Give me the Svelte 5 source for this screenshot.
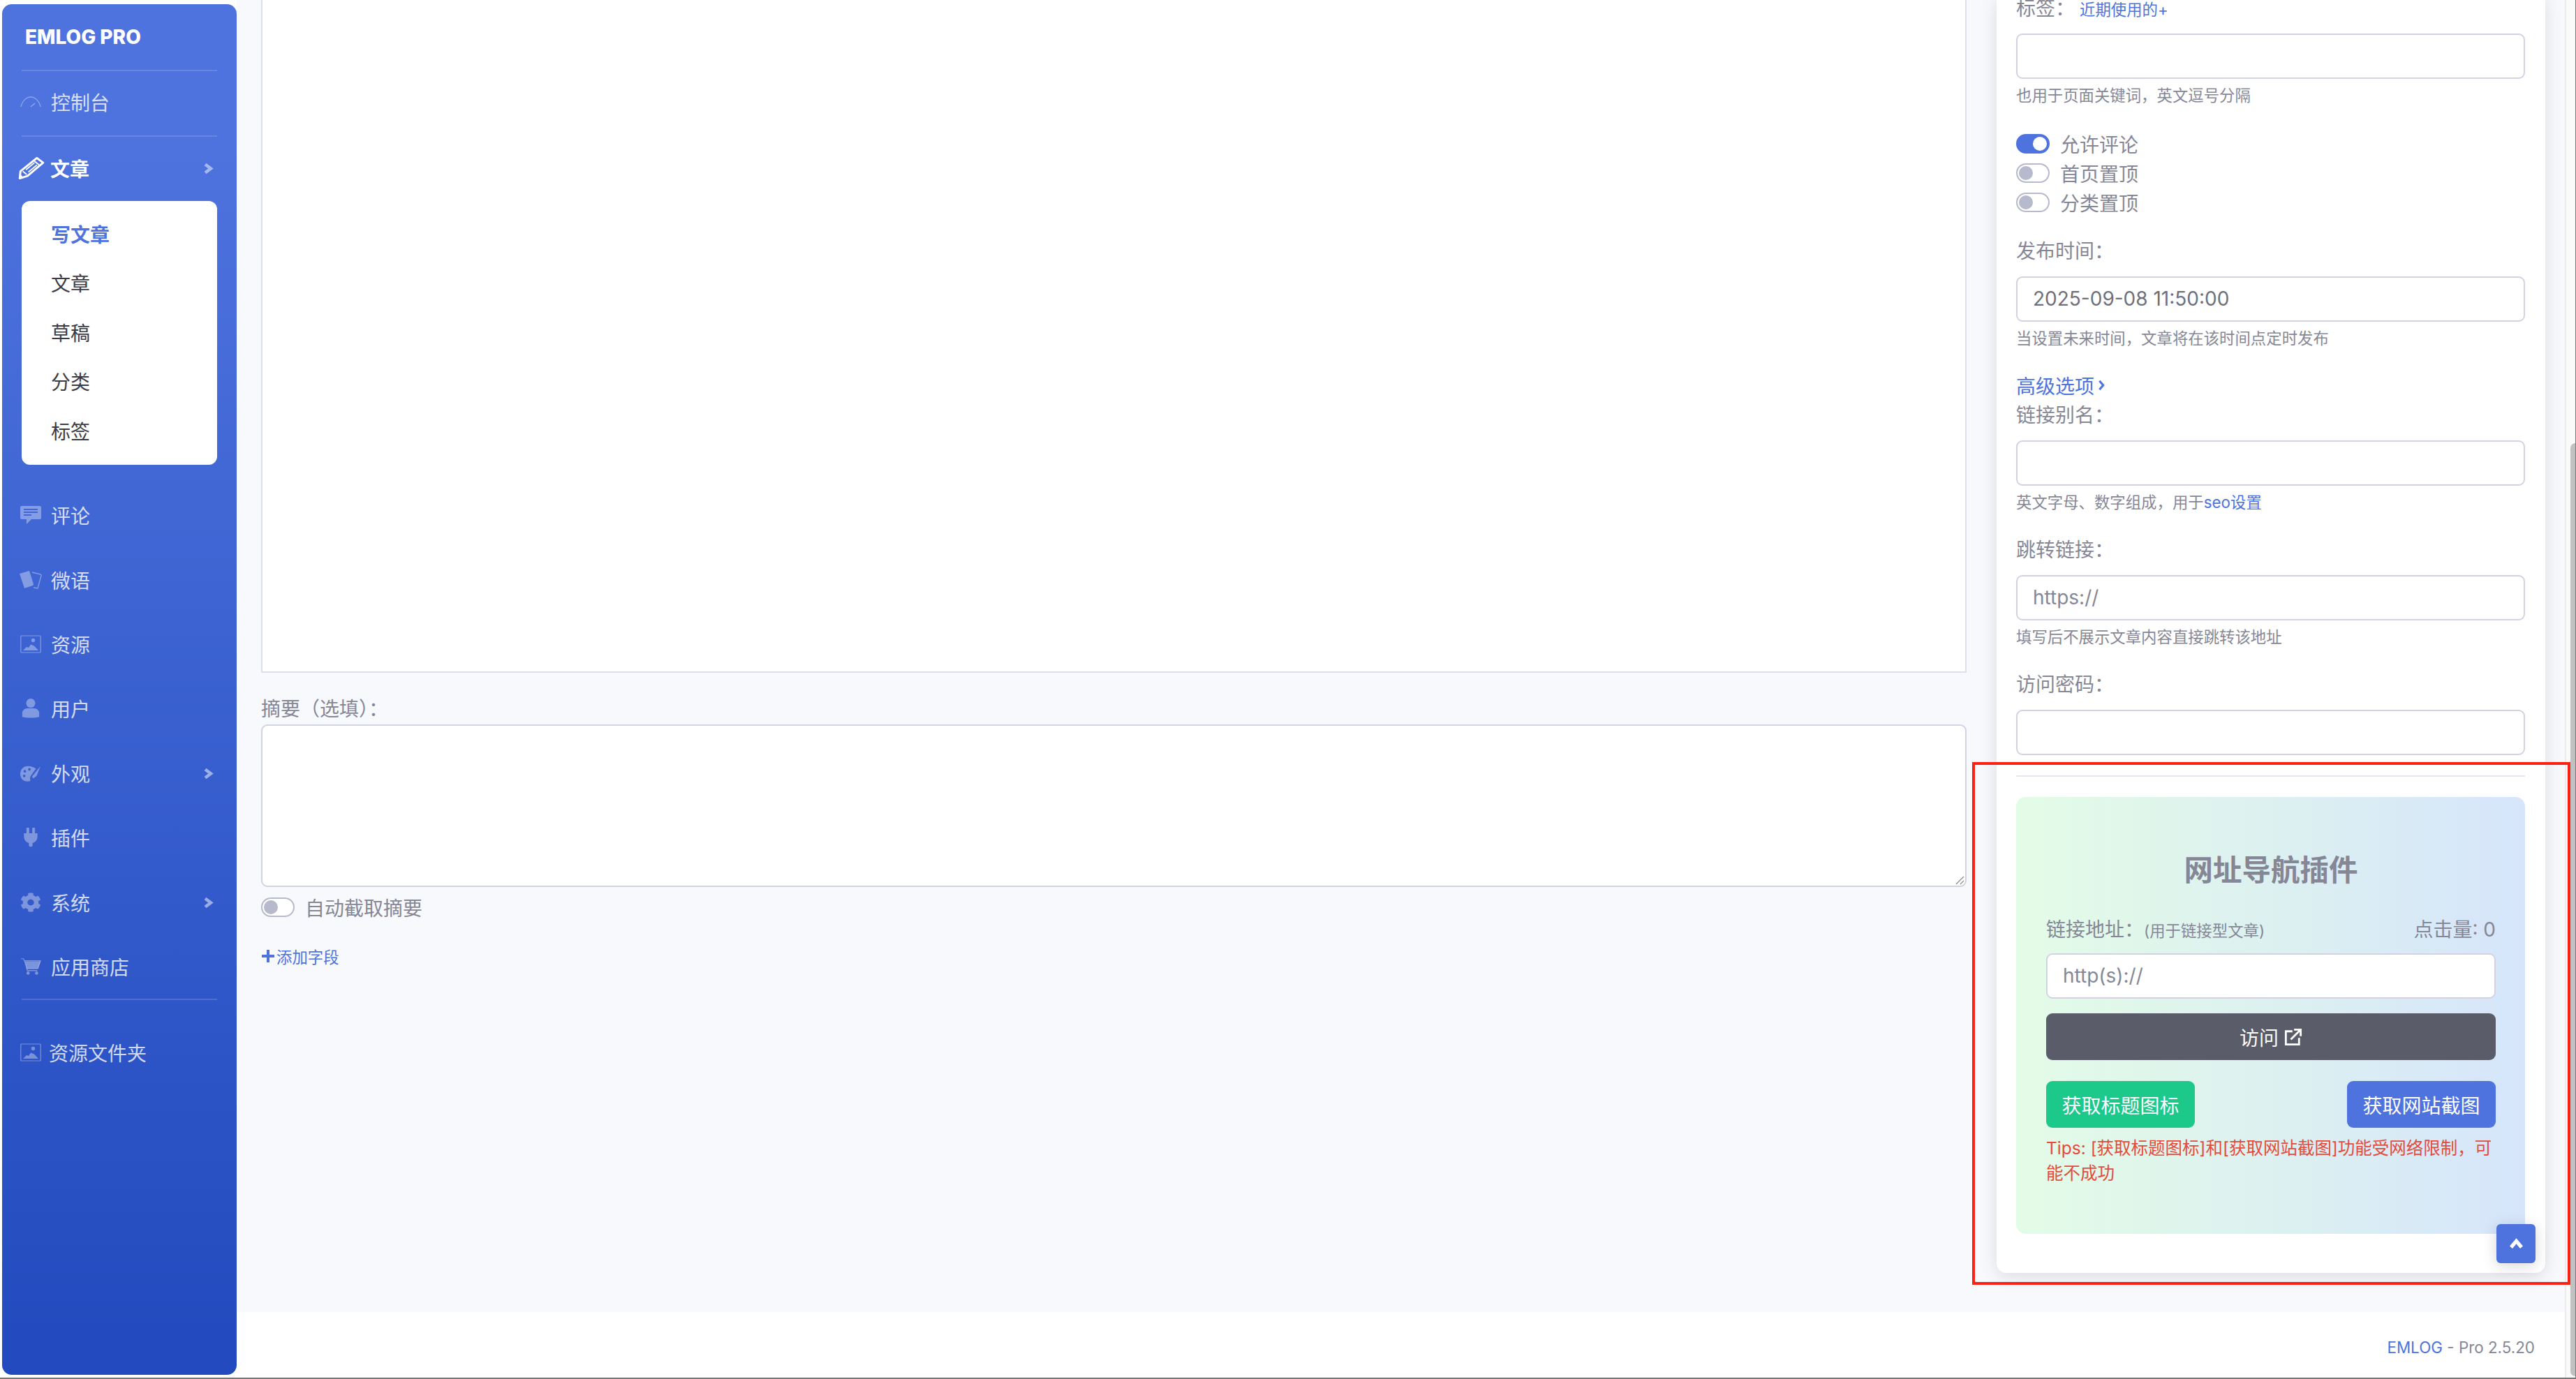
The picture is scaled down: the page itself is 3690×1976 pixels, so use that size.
<script>
	const subNav = ['文章', '草稿', '分类', '标签'];
	const gear =
		'M487.4 315.7l-42.6-24.6c4.3-23.2 4.3-47 0-70.2l42.6-24.6c4.9-2.8 7.1-8.6 5.5-14-11.1-35.6-30-67.8-54.7-94.6-3.8-4.1-10-5.1-14.8-2.3L380.8 110c-17.9-15.4-38.5-27.3-60.8-35.1V25.8c0-5.6-3.9-10.5-9.4-11.7-36.7-8.2-74.3-7.8-109.2 0-5.5 1.2-9.4 6.1-9.4 11.7V75c-22.2 7.9-42.8 19.8-60.8 35.1L88.7 85.5c-4.9-2.8-11-1.9-14.8 2.3-24.7 26.7-43.6 58.9-54.7 94.6-1.7 5.4.6 11.2 5.5 14L67.3 221c-4.3 23.2-4.3 47 0 70.2l-42.6 24.6c-4.9 2.8-7.1 8.6-5.5 14 11.1 35.6 30 67.8 54.7 94.6 3.8 4.1 10 5.1 14.8 2.3l42.6-24.6c17.9 15.4 38.5 27.3 60.8 35.1v49.2c0 5.6 3.9 10.5 9.4 11.7 36.7 8.2 74.3 7.8 109.2 0 5.5-1.2 9.4-6.1 9.4-11.7v-49.2c22.2-7.9 42.8-19.8 60.8-35.1l42.6 24.6c4.9 2.8 11 1.9 14.8-2.3 24.7-26.7 43.6-58.9 54.7-94.6 1.5-5.5-.7-11.3-5.6-14.1zM256 336c-44.1 0-80-35.9-80-80s35.9-80 80-80 80 35.9 80 80-35.9 80-80 80z';
</script>

{#snippet chevron()}
	<svg class="chevron" viewBox="0 0 14 16"><path d="M2 2l8 6-8 6" fill="none" stroke="currentColor" stroke-width="4.500" /></svg>
{/snippet}

{#snippet imageIcon()}
	<svg class="icon" viewBox="0 0 30 26">
		<rect x="0.800" y="1" width="28.400" height="24" rx="1" fill="none" stroke="currentColor" stroke-width="1.200" />
		<circle cx="18.500" cy="7.500" r="2.700" fill="currentColor" />
		<path d="M4 22l5-5 3 1 3-4.500 5 2 6 6.500z" fill="currentColor" />
	</svg>
{/snippet}

{#snippet navRow(label, more = false)}
	<span class="nav-label">{label}</span>
	{#if more}{@render chevron()}{/if}
{/snippet}

<div class="page">
	<aside class="sidebar">
		<div class="brand">EMLOG PRO</div>
		<hr class="side-line" />
		<div class="nav-item console">
			<svg class="icon" viewBox="0 0 30 18">
				<path d="M1 16C3 7 9 2 15 2s12 5 14 14" fill="none" stroke="currentColor" stroke-width="1.300" />
				<path d="M15 16l6-5" fill="none" stroke="currentColor" stroke-width="1.500" />
			</svg>
			{@render navRow('控制台')}
		</div>
		<hr class="side-line" />
		<div class="nav-item active">
			<svg class="icon pencil" viewBox="0 0 34 30">
				<path d="M24 2l8 6L12 25 2 28l1-9z" fill="none" stroke="currentColor" stroke-width="2.600" stroke-linejoin="round" />
				<path d="M6 19l5 4M21 6l6 5M10 17l11-9M13 20l11-9" fill="none" stroke="currentColor" stroke-width="1.600" />
				<path d="M2 22l5 5-5 1z" fill="currentColor" />
			</svg>
			{@render navRow('文章', true)}
		</div>
		<div class="sub-nav">
			<div class="sub-item current">写文章</div>
			{#each subNav as item}
				<div class="sub-item">{item}</div>
			{/each}
		</div>
		<div class="nav-list">
			<div class="nav-item">
				<svg class="icon" viewBox="0 0 30 28">
					<path fill-rule="evenodd" d="M2 1h26a2 2 0 0 1 2 2v15a2 2 0 0 1-2 2H16l-7 7v-7H2a2 2 0 0 1-2-2V3a2 2 0 0 1 2-2zM5 5v2h20V5zM5 9v2h20V9zM5 13v2h11v-2z" fill="currentColor" />
				</svg>
				{@render navRow('评论')}
			</div>
			<div class="nav-item">
				<svg class="icon broad" viewBox="0 0 34 28">
					<path d="M1 5l14-4 6 19a2 2 0 0 1-1 2L8 26z" fill="currentColor" />
					<path d="M19 3l12 3a1.500 1.500 0 0 1 1 2l-5 18-6-1" fill="none" stroke="currentColor" stroke-width="1.400" />
				</svg>
				{@render navRow('微语')}
			</div>
			<div class="nav-item">
				{@render imageIcon()}
				{@render navRow('资源')}
			</div>
			<div class="nav-item">
				<svg class="icon" viewBox="0 0 30 30">
					<circle cx="15" cy="7" r="7" fill="currentColor" />
					<path d="M2 28v-6c0-4 4-7 8-7h10c4 0 8 3 8 7v6c-6 2-20 2-26 0z" fill="currentColor" />
				</svg>
				{@render navRow('用户')}
			</div>
			<div class="nav-item">
				<svg class="icon" viewBox="0 0 32 26">
					<path fill-rule="evenodd" d="M12 2c5 0 9 2 12 4l-8 11c-1 2-1 3-1 4 0 2 1 3 0 4-9 2-15-3-15-11C0 7 5 2 12 2zM7 8a2 2 0 1 0 0 4 2 2 0 0 0 0-4zM14 5a2 2 0 1 0 0 4 2 2 0 0 0 0-4zM6 15a2 2 0 1 0 0 4 2 2 0 0 0 0-4z" fill="currentColor" />
					<path d="M18 18L31 2l-6 15-5 4z" fill="currentColor" />
				</svg>
				{@render navRow('外观', true)}
			</div>
			<div class="nav-item">
				<svg class="icon" viewBox="0 0 30 32">
					<path d="M9 0h2.500a1 1 0 0 1 1 1v8h5V1a1 1 0 0 1 1-1H21a1 1 0 0 1 1 1v8h4v6c0 5-4 9-8 10v4c0 1.500-1 2-3 2s-3-.5-3-2v-4c-4-1-8-5-8-10V9h4V1a1 1 0 0 1 1-1z" fill="currentColor" />
				</svg>
				{@render navRow('插件')}
			</div>
			<div class="nav-item">
				<svg class="icon" viewBox="0 0 512 512" preserveAspectRatio="none">
					<path d={gear} fill="currentColor" fill-rule="evenodd" />
				</svg>
				{@render navRow('系统', true)}
			</div>
			<div class="nav-item">
				<svg class="icon" viewBox="0 0 32 26">
					<path d="M1 1h4l1 3h25l-4 12H10L6 3" fill="none" stroke="currentColor" stroke-width="1.200" />
					<path d="M7 5h24l-4 11H10z" fill="currentColor" />
					<path d="M10 16l1 3h15" fill="none" stroke="currentColor" stroke-width="1.600" />
					<circle cx="12" cy="23" r="2.500" fill="currentColor" />
					<circle cx="25" cy="23" r="2.500" fill="currentColor" />
				</svg>
				{@render navRow('应用商店')}
			</div>
		</div>
		<hr class="side-line bottom-line" />
		<div class="nav-item">
			{@render imageIcon()}
			<span class="nav-label wide">资源文件夹</span>
		</div>
	</aside>

	<div class="main">
		<div class="content">
			<section class="left">
				<div class="editor"></div>
				<div class="label summary-label">摘要（选填）：</div>
				<div class="textarea">
					<svg class="grip" viewBox="0 0 14 14"><path d="M13 2L2 13M13 8l-5 5" stroke="#8a8a8a" stroke-width="1.200" /></svg>
				</div>
				<div class="switch-row auto-row"><span class="switch"></span><span>自动截取摘要</span></div>
				<div class="add-field"><svg viewBox="0 0 20 20"><path d="M10 1v18M1 10h18" stroke="currentColor" stroke-width="4" /></svg>添加字段</div>
			</section>

			<section class="card">
				<div class="label">标签：<span class="recent">近期使用的+</span></div>
				<div class="input"></div>
				<div class="hint">也用于页面关键词，英文逗号分隔</div>

				<div class="switches">
					<div class="switch-row"><span class="switch on"></span><span>允许评论</span></div>
					<div class="switch-row"><span class="switch"></span><span>首页置顶</span></div>
					<div class="switch-row"><span class="switch"></span><span>分类置顶</span></div>
				</div>

				<div class="label spaced">发布时间：</div>
				<div class="input filled">2025-09-08 11:50:00</div>
				<div class="hint">当设置未来时间，文章将在该时间点定时发布</div>

				<div class="advanced">高级选项 <svg viewBox="0 0 12 18"><path d="M2.500 2l6 7-6 7" fill="none" stroke="currentColor" stroke-width="3.400" /></svg></div>
				<div class="label">链接别名：</div>
				<div class="input"></div>
				<div class="hint">英文字母、数字组成，用于<span class="link">seo设置</span></div>

				<div class="label spaced">跳转链接：</div>
				<div class="input filled muted">https://</div>
				<div class="hint">填写后不展示文章内容直接跳转该地址</div>

				<div class="label spaced">访问密码：</div>
				<div class="input"></div>

				<hr class="card-line" />

				<div class="plugin">
					<h2>网址导航插件</h2>
					<div class="link-head">
						<span>链接地址：<small>(用于链接型文章)</small></span>
						<span>点击量: 0</span>
					</div>
					<div class="input filled muted plugin-input">http(s)://</div>
					<div class="btn dark">访问
						<svg viewBox="0 0 22 22"><path d="M10 4H2v16h16v-8" fill="none" stroke="currentColor" stroke-width="2.400" /><path d="M8 14L19 3M12 2h8v8" fill="none" stroke="currentColor" stroke-width="2.400" /></svg>
					</div>
					<div class="btn-row">
						<div class="btn green">获取标题图标</div>
						<div class="btn blue">获取网站截图</div>
					</div>
					<p class="tips">Tips: [获取标题图标]和[获取网站截图]功能受网络限制，可能不成功</p>
				</div>
			</section>
		</div>
		<footer><span class="link">EMLOG</span> - Pro 2.5.20</footer>
	</div>

	<div class="scrollbar"><div class="thumb"></div></div>

	<div class="scroll-top"><svg viewBox="0 0 14 12"><path d="M2 9.500l5-6 5 6" fill="none" stroke="currentColor" stroke-width="3.400" /></svg></div>
	<div class="highlight"></div>
</div>

<style>
	:global(body) {
		background: #fff;
	}

	.page {
		position: relative;
		display: flex;
		width: 3690px;
		height: 1976px;
		overflow: hidden;
		background: #fff;
		font-family: Inter, 'Noto Sans CJK SC', sans-serif;
		font-size: 28px;
		color: #858796;
		box-sizing: border-box;
		border-bottom: 2px solid #777;
	}

	.sidebar {
		flex: none;
		width: 336px;
		margin: 6px 0 4px 3px;
		padding: 0 28px;
		box-sizing: border-box;
		border-radius: 14px;
		background: linear-gradient(180deg, #4e73df 10%, #224abe 100%);
		color: rgba(255, 255, 255, 0.8);
	}

	.brand {
		height: 94px;
		line-height: 94px;
		padding-left: 5px;
		font-weight: 800;
		font-size: 28px;
		color: #fff;
	}

	.side-line {
		margin: 0;
		border: 0;
		border-top: 2px solid rgba(255, 255, 255, 0.15);
	}

	.nav-item {
		position: relative;
		display: flex;
		align-items: center;
		height: 92.400px;
		margin-left: -2px;
	}

	.console {
		height: 92px;
		padding-bottom: 5px;
		box-sizing: border-box;
	}

	.nav-item.active {
		height: 90px;
		color: #fff;
		font-weight: 700;
		margin-bottom: 2px;
	}

	.icon {
		flex: none;
		width: 30px;
		height: 28px;
		margin-right: 14px;
		color: rgba(255, 255, 255, 0.36);
	}

	.icon.broad {
		width: 34px;
		margin: 0 12px 0 -2px;
	}

	.console .icon {
		height: 18px;
	}

	.active .icon.pencil {
		width: 38px;
		height: 34px;
		margin: 0 8px 0 -3px;
		color: #fff;
	}

	.nav-label.wide {
		margin-left: -3px;
	}

	.chevron {
		position: absolute;
		right: 5px;
		top: 50%;
		width: 14px;
		height: 17px;
		margin-top: -8px;
		color: rgba(255, 255, 255, 0.5);
	}

	.sub-nav {
		height: 378px;
		padding: 14px 0 0;
		box-sizing: border-box;
		background: #fff;
		border-radius: 12px;
		color: #3a3b45;
	}

	.sub-item {
		height: 70.400px;
		line-height: 70.400px;
		padding-left: 42px;
	}

	.sub-item.current {
		color: #4e73df;
		font-weight: 700;
	}

	.nav-list {
		margin-top: 26px;
	}

	.bottom-line {
		margin: 0 0 29px;
	}

	.main {
		flex: 1;
		min-width: 0;
		display: flex;
		flex-direction: column;
	}

	.content {
		flex: none;
		height: 1880px;
		display: flex;
		gap: 43px;
		padding: 0 28px 0 35px;
		box-sizing: border-box;
		background: #f8f9fc;
		overflow: hidden;
	}

	.left {
		flex: 1;
		min-width: 0;
		margin-top: -40px;
	}

	.editor {
		height: 1004px;
		background: #fff;
		border: 2px solid #dddfeb;
		box-sizing: border-box;
	}

	.label {
		height: 36px;
		line-height: 36px;
		white-space: nowrap;
		margin-bottom: 18px;
	}

	.summary-label {
		margin: 34px 0 4px;
	}

	.textarea {
		position: relative;
		height: 233px;
		background: #fff;
		border: 2px solid #d1d3e2;
		border-radius: 9px;
		box-sizing: border-box;
	}

	.grip {
		position: absolute;
		right: 1px;
		bottom: 1px;
		width: 14px;
		height: 14px;
	}

	.switch-row {
		display: flex;
		align-items: center;
		gap: 15px;
		height: 42px;
	}

	.auto-row {
		margin-top: 8px;
	}

	.switch {
		position: relative;
		flex: none;
		width: 48px;
		height: 28px;
		box-sizing: border-box;
		background: #fff;
		border: 2px solid #b7b9cc;
		border-radius: 14px;
	}

	.switch::after {
		content: '';
		position: absolute;
		left: 2px;
		top: 2px;
		width: 20px;
		height: 20px;
		border-radius: 50%;
		background: #b7b9cc;
	}

	.switch.on {
		background: #4e73df;
		border-color: #4e73df;
	}

	.switch.on::after {
		left: 22px;
		background: #fff;
	}

	.add-field {
		display: flex;
		align-items: center;
		gap: 2px;
		margin-top: 31px;
		height: 36px;
		font-size: 22.400px;
		color: #4e73df;
	}

	.add-field svg {
		width: 20px;
		height: 20px;
	}

	.card {
		flex: none;
		width: 786px;
		height: 1830px;
		margin-top: -6px;
		padding: 0 29px 0 28px;
		box-sizing: border-box;
		background: #fff;
		border-radius: 0 0 14px 14px;
		box-shadow: 0 5px 24px rgba(58, 59, 69, 0.15);
	}

	.recent {
		margin-left: 7px;
		font-size: 22.400px;
		color: #4e73df;
	}

	.input {
		height: 65px;
		line-height: 61px;
		padding: 0 22px;
		box-sizing: border-box;
		background: #fff;
		border: 2px solid #d1d3e2;
		border-radius: 9px;
		color: #6e707e;
	}

	.muted {
		color: #858796;
	}

	.hint {
		height: 30px;
		line-height: 30px;
		margin: 9px 0 35px;
		font-size: 22.400px;
		color: #858796;
		white-space: nowrap;
	}

	.link {
		color: #4e73df;
	}

	.switches {
		margin-top: -2px;
	}

	.switches + .spaced {
		margin-top: 31px;
	}

	.advanced {
		display: flex;
		align-items: center;
		gap: 5px;
		height: 36px;
		margin-top: -1px;
		margin-bottom: 7px;
		color: #4e73df;
	}

	.advanced svg {
		width: 11px;
		height: 16px;
	}

	.card-line {
		margin: 29px 0;
		border: 0;
		border-top: 2px solid #e3e6f0;
	}

	.plugin {
		height: 626px;
		padding: 0 42px 0 43px;
		box-sizing: border-box;
		border-radius: 14px;
		background: linear-gradient(90deg, #e3fce6 0%, #d6e5fb 100%);
	}

	.plugin h2 {
		margin: 0;
		padding-top: 78px;
		height: 54px;
		line-height: 54px;
		text-align: center;
		font-size: 41.500px;
		font-weight: 700;
		color: #858796;
		box-sizing: content-box;
	}

	.link-head {
		display: flex;
		justify-content: space-between;
		align-items: center;
		margin-top: 38px;
		height: 36px;
	}

	.link-head small {
		font-size: 22.400px;
	}

	.plugin-input {
		margin-top: 18px;
	}

	.btn {
		display: flex;
		align-items: center;
		justify-content: center;
		gap: 8px;
		height: 67px;
		box-sizing: border-box;
		border-radius: 9px;
		color: #fff;
	}

	.btn svg {
		width: 26px;
		height: 26px;
	}

	.dark {
		margin-top: 21px;
		background: #5a5c69;
	}

	.btn-row {
		display: flex;
		justify-content: space-between;
		margin-top: 30px;
	}

	.green,
	.blue {
		width: 213px;
	}

	.green {
		background: #1cc88a;
	}

	.blue {
		background: #4e73df;
	}

	.tips {
		margin: 11px 0 0;
		font-size: 24.500px;
		line-height: 36px;
		color: #e74a3b;
	}

	footer {
		flex: 1;
		padding-right: 43px;
		line-height: 102px;
		text-align: right;
		font-size: 22.400px;
		color: #858796;
		background: #fff;
	}

	.scrollbar {
		flex: none;
		width: 16px;
		box-sizing: border-box;
		background: #fafafa;
		border-left: 2px solid #ececec;
		border-right: 1px solid #777;
	}

	.thumb {
		width: 7px;
		height: 1337px;
		margin: 635px 0 0 6px;
		background: #c1c1c1;
		border-radius: 7px 0 0 7px;
	}

	.scroll-top {
		position: absolute;
		left: 3576px;
		top: 1754px;
		display: flex;
		align-items: center;
		justify-content: center;
		width: 56px;
		height: 56px;
		border-radius: 6px;
		background: #4e73df;
		color: #fff;
		box-shadow: 0 4px 20px rgba(58, 59, 69, 0.2);
	}

	.scroll-top svg {
		width: 21px;
		height: 18px;
	}

	.highlight {
		position: absolute;
		left: 2825px;
		top: 1092px;
		width: 857px;
		height: 749px;
		box-sizing: border-box;
		border: 4px solid #fb2113;
	}
</style>
